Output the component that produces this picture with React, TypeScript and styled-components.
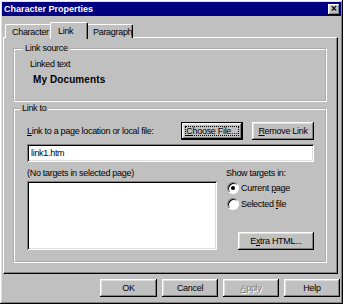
import React, { useState } from "react";
import styled, { createGlobalStyle, css } from "styled-components";

const GlobalStyle = createGlobalStyle`
  html, body {
    margin: 0;
    padding: 0;
    background: #c0c0c0;
  }
  body {
    font-family: "Liberation Sans", Arial, sans-serif;
    font-size: 9px;
    letter-spacing: -0.3px;
    color: #000;
  }
`;

const uiFont = css`
  font-family: "Liberation Sans", Arial, sans-serif;
  font-size: 9px;
  letter-spacing: -0.3px;
`;

const raised = css`
  box-shadow: inset -1px -1px #000, inset 1px 1px #fff, inset -2px -2px #808080,
    inset 2px 2px #dfdfdf;
`;

const sunken = css`
  box-shadow: inset 1px 1px #808080, inset -1px -1px #fff, inset 2px 2px #000,
    inset -2px -2px #dfdfdf;
`;

const Window = styled.div`
  width: 343px;
  height: 304px;
  box-sizing: border-box;
  padding: 2px;
  background: #c0c0c0;
  display: flex;
  flex-direction: column;
  ${raised}
`;

const TitleBar = styled.div`
  height: 14px;
  background: #000080;
  display: flex;
  align-items: center;
  justify-content: space-between;
  padding: 0 1px 0 2px;
`;

const Title = styled.span`
  color: #fff;
  font-weight: bold;
  font-size: 9px;
  letter-spacing: 0;
`;

const CloseButton = styled.button`
  width: 12px;
  height: 11px;
  padding: 0;
  border: none;
  background: #c0c0c0;
  font-family: "Liberation Sans", Arial, sans-serif;
  font-size: 10px;
  font-weight: bold;
  line-height: 10px;
  color: #000;
  display: flex;
  align-items: center;
  justify-content: center;
  ${raised}
`;

const TabStrip = styled.div`
  margin-top: 6px;
  height: 16px;
  padding-left: 3px;
  display: flex;
  align-items: flex-end;
  position: relative;
  z-index: 1;
`;

const Tab = styled.div<{ $active?: boolean; $w: number }>`
  box-sizing: border-box;
  width: ${(p) => p.$w}px;
  height: ${(p) => (p.$active ? 17 : 14)}px;
  margin: ${(p) => (p.$active ? "0 -2px -1px -2px" : "0")};
  padding-left: ${(p) => (p.$active ? 7 : 6)}px;
  display: flex;
  align-items: center;
  background: #c0c0c0;
  border-top: 1px solid #fff;
  border-left: 1px solid #fff;
  border-right: 1px solid #000;
  border-radius: 2px 2px 0 0;
  box-shadow: inset -1px 0 #808080;
  z-index: ${(p) => (p.$active ? 2 : 1)};
`;

const Panel = styled.div`
  height: 237px;
  margin: -1px 3px 0 1px;
  box-sizing: border-box;
  padding: 4px 10px 0 9px;
  display: flex;
  flex-direction: column;
  border-top: 1px solid #fff;
  border-left: 1px solid #fff;
  border-right: 1px solid #000;
  border-bottom: 1px solid #000;
  box-shadow: inset -1px -1px #808080;
`;

const Group = styled.fieldset<{ $pad: string; $h: number }>`
  box-sizing: border-box;
  height: ${(p) => p.$h}px;
  margin: 0;
  padding: ${(p) => p.$pad};
  border: 2px groove #fff;
  min-width: 0;
`;

const Legend = styled.legend`
  padding: 0 2px;
  margin-left: -7px;
  line-height: 13px;
`;

const Label = styled.div`
  line-height: 13px;
  white-space: nowrap;
`;

const Strong = styled.div`
  font-weight: bold;
  font-size: 10px;
  letter-spacing: 0.1px;
  line-height: 14px;
  padding-left: 3px;
  margin-top: 2px;
`;

const Row = styled.div<{ $gap?: number }>`
  display: flex;
  align-items: center;
  justify-content: space-between;
  gap: ${(p) => p.$gap ?? 0}px;
`;

const Button = styled.button<{ $w: number; $default?: boolean; $disabled?: boolean }>`
  box-sizing: border-box;
  width: ${(p) => p.$w}px;
  height: 18px;
  padding: 0;
  border: none;
  background: #c0c0c0;
  ${uiFont}
  color: ${(p) => (p.$disabled ? "#808080" : "#000")};
  text-shadow: ${(p) => (p.$disabled ? "1px 1px #fff" : "none")};
  display: flex;
  align-items: center;
  justify-content: center;
  white-space: nowrap;
  ${(p) =>
    p.$default
      ? css`
          border: 1px solid #000;
          box-shadow: inset -1px -1px #000, inset 1px 1px #fff,
            inset -2px -2px #808080, inset 2px 2px #dfdfdf;
        `
      : raised}
`;

const Focus = styled.span`
  box-sizing: border-box;
  width: calc(100% - 6px);
  height: calc(100% - 6px);
  border: 1px dotted #000;
  display: flex;
  align-items: center;
  justify-content: center;
`;

const TextInput = styled.input`
  box-sizing: border-box;
  width: 287px;
  height: 18px;
  margin-top: 4px;
  border: none;
  padding: 0 4px;
  ${uiFont}
  background: #fff;
  outline: none;
  ${sunken}
`;

const Lower = styled.div`
  display: flex;
  margin-top: 5px;
  gap: 9px;
`;

const LeftCol = styled.div`
  width: 190px;
  display: flex;
  flex-direction: column;
`;

const ListBox = styled.div`
  height: 69px;
  margin-top: 1px;
  background: #fff;
  ${sunken}
`;

const RightCol = styled.div`
  flex: 1;
  display: flex;
  flex-direction: column;
`;

const RadioRow = styled.label`
  display: flex;
  align-items: center;
  height: 16px;
  padding-left: 1px;
  gap: 2px;
`;

const RadioDot = styled.span<{ $on?: boolean }>`
  width: 12px;
  height: 12px;
  border-radius: 50%;
  background: #fff;
  box-sizing: border-box;
  border: 1px solid;
  border-color: #808080 #fff #fff #808080;
  box-shadow: inset 1px 1px #000;
  display: flex;
  align-items: center;
  justify-content: center;
  &::after {
    content: "";
    width: 4px;
    height: 4px;
    border-radius: 50%;
    background: #000;
    display: ${(p) => (p.$on ? "block" : "none")};
  }
`;

const ExtraWrap = styled.div`
  margin-top: auto;
  display: flex;
  justify-content: flex-end;
`;

const Footer = styled.div`
  margin-top: 5px;
  display: flex;
  justify-content: flex-end;
  gap: 5px;
  padding-right: 1px;
`;

const U = styled.span`
  text-decoration: underline;
`;

const App: React.FC = () => {
  const [target, setTarget] = useState<"current" | "selected">("current");
  const [link, setLink] = useState("link1.htm");

  return (
    <>
      <GlobalStyle />
      <Window>
        <TitleBar>
          <Title>Character Properties</Title>
          <CloseButton>×</CloseButton>
        </TitleBar>
        <TabStrip>
          <Tab $w={47}>Character</Tab>
          <Tab $w={38} $active>
            Link
          </Tab>
          <Tab $w={47}>Paragraph</Tab>
        </TabStrip>
        <Panel>
          <Group $h={60} $pad="3px 10px 0 15px">
            <Legend>Link source</Legend>
            <Label>Linked text</Label>
            <Strong>My Documents</Strong>
          </Group>
          <Group $h={161} $pad="7px 11px 0 12px">
            <Legend>Link to</Legend>
            <Row>
              <Label>
                <U>L</U>ink to a page location or local file:
              </Label>
              <Row $gap={9}>
                <Button $w={62} $default>
                  <Focus>
                    <span>
                      <U>C</U>hoose File...
                    </span>
                  </Focus>
                </Button>
                <Button $w={62}>
                  <U>R</U>emove Link
                </Button>
              </Row>
            </Row>
            <TextInput value={link} onChange={(e) => setLink(e.target.value)} />
            <Lower>
              <LeftCol>
                <Label>(No targets in selected page)</Label>
                <ListBox />
              </LeftCol>
              <RightCol>
                <Label>Show targets in:</Label>
                <RadioRow onClick={() => setTarget("current")}>
                  <RadioDot $on={target === "current"} />
                  <span>
                    Current <U>p</U>age
                  </span>
                </RadioRow>
                <RadioRow onClick={() => setTarget("selected")}>
                  <RadioDot $on={target === "selected"} />
                  <span>
                    Selected <U>f</U>ile
                  </span>
                </RadioRow>
                <ExtraWrap>
                  <Button $w={76}>
                    E<U>x</U>tra HTML...
                  </Button>
                </ExtraWrap>
              </RightCol>
            </Lower>
          </Group>
        </Panel>
        <Footer>
          <Button $w={57}>OK</Button>
          <Button $w={56}>Cancel</Button>
          <Button $w={56} $disabled>
            <U>A</U>pply
          </Button>
          <Button $w={56}>Help</Button>
        </Footer>
      </Window>
    </>
  );
};

export default App;
